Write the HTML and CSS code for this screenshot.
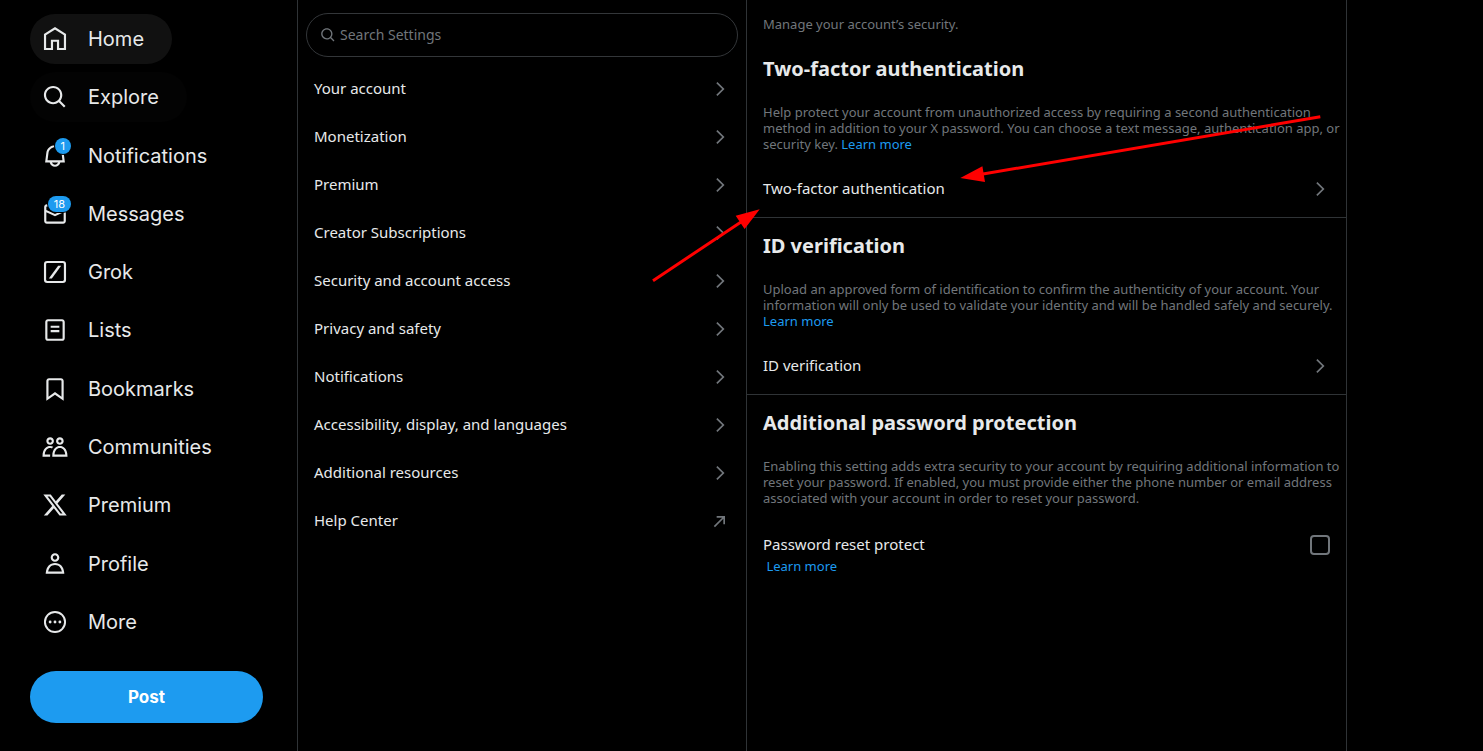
FILE: index.html
```html
<!DOCTYPE html>
<html lang="en">
<head>
<meta charset="utf-8">
<meta name="viewport" content="width=device-width, initial-scale=1">
<title>Security / X</title>
<link rel="stylesheet" href="styles.css">
</head>
<body>
<svg class="symbols" aria-hidden="true">
  <symbol id="chevron" viewBox="0 0 24 24"><path d="M14.586 12L7.543 4.96l1.414-1.42L17.414 12l-8.457 8.46-1.414-1.42L14.586 12z"/></symbol>
  <symbol id="external" viewBox="0 0 24 24"><path d="M8 6h10v10h-2V9.41L5.957 19.46l-1.414-1.42L14.586 8H8V6z"/></symbol>
  <symbol id="search" viewBox="0 0 24 24"><path d="M10.25 3.75c-3.59 0-6.5 2.91-6.5 6.5s2.91 6.5 6.5 6.5c1.795 0 3.419-.726 4.596-1.904 1.178-1.177 1.904-2.801 1.904-4.596 0-3.59-2.91-6.5-6.5-6.5zm-8.5 6.5c0-4.694 3.806-8.5 8.5-8.5s8.5 3.806 8.5 8.5c0 1.986-.682 3.815-1.824 5.262l4.781 4.781-1.414 1.414-4.781-4.781c-1.447 1.142-3.276 1.824-5.262 1.824-4.694 0-8.5-3.806-8.5-8.5z"/></symbol>
</svg>
<div class="app">
  <header class="sidebar">
    <nav class="nav" aria-label="Primary">
      <a class="nav-item is-hovered" href="#"><span class="nav-icon"><svg viewBox="0 0 24 24"><path class="stroke" d="M2.8 21.2V7.9L12 2.2l9.2 5.7v13.3h-6.4v-7.6H9.2v7.6z"/></svg></span>Home</a>
      <a class="nav-item is-fading" href="#"><span class="nav-icon"><svg><use href="#search"/></svg></span>Explore</a>
      <a class="nav-item" href="#"><span class="nav-icon"><svg viewBox="0 0 24 24"><path d="M19.993 9.042C19.48 5.017 16.054 2 11.996 2s-7.49 3.021-7.999 7.051L2.866 18H7.1c.463 2.282 2.481 4 4.9 4s4.437-1.718 4.9-4h4.236l-1.143-8.958zM12 20c-1.306 0-2.417-.835-2.829-2h5.658c-.412 1.165-1.523 2-2.829 2zm-6.866-4l.847-6.698C6.364 6.272 8.941 4 11.996 4s5.627 2.268 6.013 5.295L18.864 16H5.134z"/></svg><span class="badge">1</span></span>Notifications</a>
      <a class="nav-item" href="#"><span class="nav-icon"><svg viewBox="0 0 24 24"><path d="M1.998 5.5c0-1.381 1.119-2.5 2.5-2.5h15c1.381 0 2.5 1.119 2.5 2.5v13c0 1.381-1.119 2.5-2.5 2.5h-15c-1.381 0-2.5-1.119-2.5-2.5v-13zm2.5-.5c-.276 0-.5.224-.5.5v2.764l8 3.638 8-3.636V5.5c0-.276-.224-.5-.5-.5h-15zm15.5 5.463l-8 3.636-8-3.638V18.5c0 .276.224.5.5.5h15c.276 0 .5-.224.5-.5v-8.037z"/></svg><span class="badge">18</span></span>Messages</a>
      <a class="nav-item" href="#"><span class="nav-icon"><svg viewBox="0 0 24 24"><rect class="stroke" x="2.8" y="2.8" width="18.4" height="18.4" rx="2"/><path d="M6.3 18 14.9 6.2h2.8L9.1 18z"/></svg></span>Grok</a>
      <a class="nav-item" href="#"><span class="nav-icon"><svg viewBox="0 0 24 24"><path d="M3 4.5C3 3.12 4.12 2 5.5 2h13C19.88 2 21 3.12 21 4.5v15c0 1.38-1.12 2.5-2.5 2.5h-13C4.12 22 3 20.88 3 19.5v-15zM5.5 4c-.28 0-.5.22-.5.5v15c0 .28.22.5.5.5h13c.28 0 .5-.22.5-.5v-15c0-.28-.22-.5-.5-.5h-13zM16 10H8V8h8v2zm-8 2h8v2H8v-2z"/></svg></span>Lists</a>
      <a class="nav-item" href="#"><span class="nav-icon"><svg viewBox="0 0 24 24"><path d="M4 4.5C4 3.12 5.119 2 6.5 2h11C18.881 2 20 3.12 20 4.5v18.44l-8-5.71-8 5.71V4.5zM6.5 4c-.276 0-.5.22-.5.5v14.56l6-4.29 6 4.29V4.5c0-.28-.224-.5-.5-.5h-11z"/></svg></span>Bookmarks</a>
      <a class="nav-item" href="#"><span class="nav-icon"><svg viewBox="0 0 24 24"><path d="M7.501 19.917L7.471 21H.472l.029-1.027c.184-6.618 3.736-8.977 7-8.977.963 0 1.95.212 2.87.672-.444.478-.851 1.03-1.212 1.656-.507-.204-1.054-.329-1.658-.329-2.767 0-4.57 2.223-4.938 6.004H7.56c-.023.302-.05.599-.059.918zm15.998.056L23.528 21H9.472l.029-1.027c.184-6.618 3.736-8.977 7-8.977s6.816 2.358 7 8.977zM21.437 19c-.367-3.781-2.17-6.004-4.938-6.004s-4.57 2.223-4.938 6.004h9.875zm-4.938-9c-.799 0-1.527-.279-2.116-.73-.836-.64-1.384-1.638-1.384-2.77 0-1.93 1.567-3.5 3.5-3.5s3.5 1.57 3.5 3.5c0 1.132-.548 2.13-1.384 2.77-.589.451-1.317.73-2.116.73zm-1.5-3.5c0 .827.673 1.5 1.5 1.5s1.5-.673 1.5-1.5-.673-1.5-1.5-1.5-1.5.673-1.5 1.5zM7.5 3C9.433 3 11 4.57 11 6.5S9.433 10 7.5 10 4 8.43 4 6.5 5.567 3 7.5 3zm0 2C6.673 5 6 5.673 6 6.5S6.673 8 7.5 8 9 7.327 9 6.5 8.327 5 7.5 5z"/></svg></span>Communities</a>
      <a class="nav-item" href="#"><span class="nav-icon"><svg viewBox="0 0 24 24"><path d="M18.244 2.25h3.308l-7.227 8.26 8.502 11.24H16.17l-5.214-6.817L4.99 21.75H1.68l7.73-8.835L1.254 2.25H8.08l4.713 6.231zm-1.161 17.52h1.833L7.084 4.126H5.117z"/></svg></span>Premium</a>
      <a class="nav-item" href="#"><span class="nav-icon"><svg viewBox="0 0 24 24"><path d="M5.651 19h12.698c-.337-1.8-1.023-3.21-1.945-4.19C15.318 13.65 13.838 13 12 13s-3.317.65-4.404 1.81c-.922.98-1.608 2.39-1.945 4.19zm.486-5.56C7.627 11.85 9.648 11 12 11s4.373.85 5.863 2.44c1.477 1.58 2.366 3.8 2.632 6.46l.11 1.1H3.395l.11-1.1c.266-2.66 1.155-4.88 2.632-6.46zM12 4c-1.105 0-2 .9-2 2s.895 2 2 2 2-.9 2-2-.895-2-2-2zM8 6c0-2.21 1.791-4 4-4s4 1.79 4 4-1.791 4-4 4-4-1.79-4-4z"/></svg></span>Profile</a>
      <a class="nav-item" href="#"><span class="nav-icon"><svg viewBox="0 0 24 24"><circle class="stroke thin" cx="12" cy="12" r="9.3"/><circle cx="7.5" cy="12" r="1.3"/><circle cx="12" cy="12" r="1.3"/><circle cx="16.5" cy="12" r="1.3"/></svg></span>More</a>
    </nav>
    <button class="post" type="button">Post</button>
  </header>

  <section class="settings" aria-label="Settings">
    <label class="search">
      <svg><use href="#search"/></svg>
      <input type="text" placeholder="Search Settings" aria-label="Search Settings">
    </label>
    <nav class="rows" aria-label="Settings sections">
      <a class="row" href="#">Your account<svg><use href="#chevron"/></svg></a>
      <a class="row" href="#">Monetization<svg><use href="#chevron"/></svg></a>
      <a class="row" href="#">Premium<svg><use href="#chevron"/></svg></a>
      <a class="row" href="#">Creator Subscriptions<svg><use href="#chevron"/></svg></a>
      <a class="row" href="#">Security and account access<svg><use href="#chevron"/></svg></a>
      <a class="row" href="#">Privacy and safety<svg><use href="#chevron"/></svg></a>
      <a class="row" href="#">Notifications<svg><use href="#chevron"/></svg></a>
      <a class="row" href="#">Accessibility, display, and languages<svg><use href="#chevron"/></svg></a>
      <a class="row" href="#">Additional resources<svg><use href="#chevron"/></svg></a>
      <a class="row" href="#">Help Center<svg><use href="#external"/></svg></a>
    </nav>
  </section>

  <main class="detail">
    <p class="intro">Manage your account’s security.</p>
    <section class="block">
      <h2>Two-factor authentication</h2>
      <p>Help protect your account from unauthorized access by requiring a second authentication<br>method in addition to your X password. You can choose a text message, authentication app, or<br>security key. <a class="link" href="#">Learn more</a></p>
      <a class="row" href="#">Two-factor authentication<svg><use href="#chevron"/></svg></a>
    </section>
    <section class="block">
      <h2>ID verification</h2>
      <p>Upload an approved form of identification to confirm the authenticity of your account. Your<br>information will only be used to validate your identity and will be handled safely and securely.<br><a class="link" href="#">Learn more</a></p>
      <a class="row" href="#">ID verification<svg><use href="#chevron"/></svg></a>
    </section>
    <section class="block">
      <h2>Additional password protection</h2>
      <p>Enabling this setting adds extra security to your account by requiring additional information to<br>reset your password. If enabled, you must provide either the phone number or email address<br>associated with your account in order to reset your password.</p>
      <div class="check-row">
        <label for="reset-protect">Password reset protect</label>
        <input id="reset-protect" type="checkbox">
      </div>
      <p class="note">&nbsp;<a class="link" href="#">Learn more</a></p>
    </section>
  </main>

  <svg class="arrows" width="1483" height="751" viewBox="0 0 1483 751" aria-hidden="true">
    <path class="shaft" d="M1320.3 116.8 983 174M653 280.7 741 222"/>
    <path d="M960.3 177.9 982.4 166.2 985 181.9zM759.7 209.3 735.7 215.8 744.6 229z"/>
  </svg>
</div>
</body>
</html>
```
FILE: styles.css
```css
* {
  box-sizing: border-box;
}

body {
  margin: 0;
  background: #000;
  color: #e7e9ea;
  font-family: "Noto Sans", "Liberation Sans", sans-serif;
  font-size: 15px;
  line-height: 20px;
}

a {
  color: inherit;
  text-decoration: none;
}

svg {
  fill: currentColor;
}

.symbols {
  position: absolute;
  width: 0;
  height: 0;
}

.app {
  position: relative;
  display: grid;
  grid-template-columns: minmax(0, 298fr) minmax(0, 449fr) minmax(0, 600fr) minmax(0, 136fr);
  min-height: 100vh;
  overflow: hidden;
}

.sidebar {
  display: flex;
  flex-direction: column;
  gap: 24px;
  padding: 14px 34px 28px 30px;
  border-right: 1px solid #2f3336;
}

.nav {
  flex: 1;
  display: flex;
  flex-direction: column;
  align-items: flex-start;
  justify-content: space-between;
}

.nav-item {
  display: flex;
  align-items: center;
  gap: 20px;
  padding: 12px 28px 12px 12px;
  border-radius: 25px;
  font-family: Inter, "Liberation Sans", sans-serif;
  font-size: 20px;
  line-height: 26px;
}

.is-hovered {
  background: #111;
}

.is-fading {
  background: #030303;
}

.nav-icon {
  position: relative;
  display: flex;
}

.nav-icon svg {
  width: 26px;
  height: 26px;
}

.stroke {
  fill: none;
  stroke: currentColor;
  stroke-width: 2;
}

.thin {
  stroke-width: 1.8;
}

.badge {
  position: absolute;
  top: -5px;
  right: -3px;
  min-width: 16px;
  padding: 0 6px;
  border-radius: 8px;
  background: #1d9bf0;
  box-shadow: 0 0 0 1px #000;
  color: #fff;
  font-size: 11px;
  line-height: 16px;
  text-align: center;
}

.post {
  height: 52px;
  border: 0;
  border-radius: 26px;
  background: #1d9bf0;
  color: #fff;
  font: bold 17px/20px Inter, "Liberation Sans", sans-serif;
}

.settings {
  padding-top: 13px;
  border-right: 1px solid #2f3336;
}

.search {
  display: flex;
  align-items: center;
  gap: 4px;
  height: 44px;
  margin: 0 8px 8px;
  padding: 0 13px;
  border: 1px solid #333639;
  border-radius: 22px;
  color: #71767b;
}

.search svg {
  width: 16px;
  height: 16px;
}

.search input {
  flex: 1;
  min-width: 0;
  padding: 0;
  border: 0;
  outline: 0;
  background: none;
  color: #e7e9ea;
  font: 14px/20px "Noto Sans", "Liberation Sans", sans-serif;
}

.search input::placeholder {
  color: #71767b;
  opacity: 1;
}

.row {
  display: flex;
  align-items: flex-start;
  justify-content: space-between;
  padding: 14px 16px;
  line-height: 18px;
}

.row svg {
  width: 20px;
  height: 20px;
  color: #71767b;
}

.detail {
  padding-top: 16px;
  border-right: 1px solid #2f3336;
}

.detail p {
  margin: 0;
  padding: 0 16px;
  color: #71767b;
  font-size: 13px;
  line-height: 16px;
  white-space: nowrap;
}

.detail .intro {
  padding-bottom: 9px;
}

.block {
  padding: 16px 0 4px;
}

.block + .block {
  border-top: 1px solid #2f3336;
}

.block h2 {
  margin: 0 0 23px;
  padding: 0 16px;
  font-size: 20px;
  line-height: 24px;
}

.block .row {
  margin-top: 13px;
}

.detail .link {
  color: #1d9bf0;
}

.check-row {
  display: flex;
  align-items: flex-start;
  justify-content: space-between;
  margin-top: 29px;
  padding: 0 16px;
  line-height: 18px;
}

.check-row input {
  appearance: none;
  width: 20px;
  height: 20px;
  margin: 0;
  border: 2px solid #71767b;
  border-radius: 4px;
}

.detail .note {
  margin-top: 3px;
}

.arrows {
  position: absolute;
  top: 0;
  left: 0;
  fill: #f00;
  pointer-events: none;
}

.shaft {
  stroke: #f00;
  stroke-width: 3;
}
```
